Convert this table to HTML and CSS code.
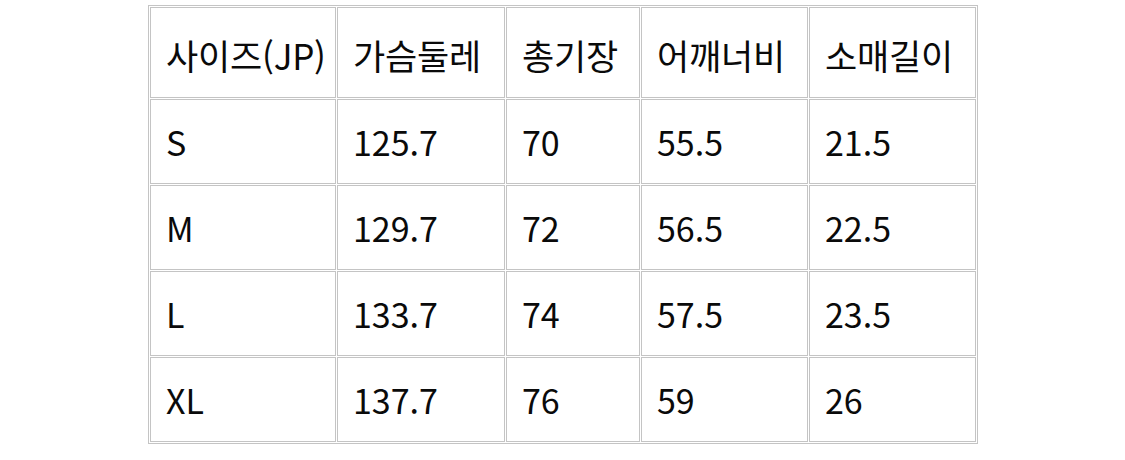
FILE: index.html
```html
<!DOCTYPE html>
<html lang="ko">
<head>
<meta charset="utf-8">
<link rel="stylesheet" href="styles.css">
</head>
<body>
<div class="wrap">
<table class="size">
  <tr class="head">
    <td class="c1">사이즈(JP)</td>
    <td class="c2">가슴둘레</td>
    <td class="c3">총기장</td>
    <td class="c4">어깨너비</td>
    <td class="c5">소매길이</td>
  </tr>
  <tr><td>S</td><td>125.7</td><td>70</td><td>55.5</td><td>21.5</td></tr>
  <tr><td>M</td><td>129.7</td><td>72</td><td>56.5</td><td>22.5</td></tr>
  <tr><td>L</td><td>133.7</td><td>74</td><td>57.5</td><td>23.5</td></tr>
  <tr><td>XL</td><td>137.7</td><td>76</td><td>59</td><td>26</td></tr>
</table>
</div>
</body>
</html>
```
FILE: styles.css
```css
html, body {
  margin: 0;
  padding: 0;
  background: #fff;
}
body {
  font-family: "Noto Sans CJK KR", "Noto Sans", sans-serif;
  color: #0a0a0a;
  overflow: hidden;
  height: 460px;
}
.wrap {
  padding: 5px 0 0 148px;
}
.size {
  border: 1px solid #c4c4c4;
  border-spacing: 1px;
  font-size: 34px;
  line-height: 1;
}
.size td {
  border: 1px solid #c4c4c4;
  padding: 0 0 0 15px;
  height: 85px;
  box-sizing: border-box;
  vertical-align: middle;
  text-align: left;
  white-space: nowrap;
}
.size .head td {
  height: 91px;
  padding-top: 4px;
  font-size: 35px;
  letter-spacing: -0.2px;
}
.c1 { width: 186px; }
.c2 { width: 168px; }
.c3 { width: 134px; }
.c4 { width: 167px; }
.c5 { width: 167px; }
```
